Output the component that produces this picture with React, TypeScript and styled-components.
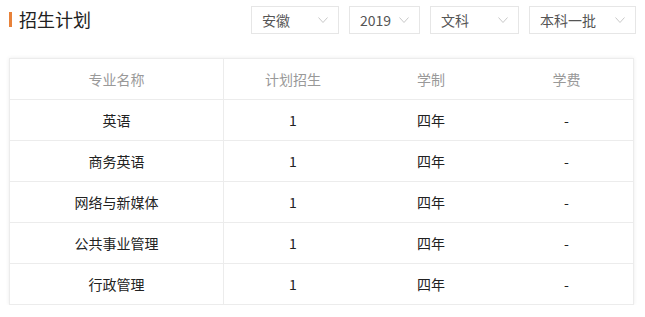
import styled, { createGlobalStyle } from "styled-components";

const GlobalStyle = createGlobalStyle`
  body {
    margin: 0;
    background: #fff;
    font-family: "Noto Sans CJK SC", "Noto Sans", sans-serif;
    color: #333;
  }
`;

const Wrapper = styled.div`
  padding: 6px 9px 0 9px;
  width: 645px;
  box-sizing: border-box;
`;

const Header = styled.div`
  display: flex;
  justify-content: space-between;
  align-items: center;
  height: 28px;
`;

const Title = styled.h2`
  margin: 0;
  display: flex;
  align-items: center;
  font-size: 18px;
  font-weight: 400;
  line-height: 24px;
  color: #222;
  margin-top: -2px;

  &::before {
    content: "";
    display: block;
    width: 3px;
    height: 15px;
    background: #e8823a;
    margin-right: 7px;
  }
`;

const Selects = styled.div`
  display: flex;
  gap: 10px;
`;

const Select = styled.div<{ $w: number }>`
  width: ${(p) => p.$w}px;
  height: 28px;
  box-sizing: border-box;
  border: 1px solid #e6e6e6;
  display: flex;
  align-items: center;
  justify-content: space-between;
  padding: 0 10px 0 10px;
  font-size: 14px;
  color: #555;
`;

const Chevron = () => (
  <svg width="10" height="6" viewBox="0 0 10 6">
    <path d="M0.5 0.5 L5 5.5 L9.5 0.5" fill="none" stroke="#c8c8c8" strokeWidth="1" />
  </svg>
);

const Table = styled.div`
  margin-top: 24px;
  width: 625px;
  border: 1px solid #ececec;
  box-shadow: 0 0 4px rgba(0, 0, 0, 0.08);
  box-sizing: border-box;
`;

const Row = styled.div`
  display: grid;
  grid-template-columns: 214px 138px 138px 1fr;
  height: 41px;
  border-top: 1px solid #ececec;
  box-sizing: border-box;

  &:first-child {
    border-top: none;
    height: 40px;
  }
`;

const Cell = styled.div<{ $head?: boolean }>`
  display: flex;
  align-items: center;
  justify-content: center;
  font-size: 14px;
  color: ${(p) => (p.$head ? "#999" : "#222")};

  &:first-child {
    border-right: 1px solid #ececec;
  }
`;

const selects = [
  { label: "安徽", w: 88 },
  { label: "2019", w: 71 },
  { label: "文科", w: 89 },
  { label: "本科一批", w: 107 },
];

const rows = [
  ["英语", "1", "四年", "-"],
  ["商务英语", "1", "四年", "-"],
  ["网络与新媒体", "1", "四年", "-"],
  ["公共事业管理", "1", "四年", "-"],
  ["行政管理", "1", "四年", "-"],
];

export default function App() {
  return (
    <Wrapper>
      <GlobalStyle />
      <Header>
        <Title>招生计划</Title>
        <Selects>
          {selects.map((s) => (
            <Select key={s.label} $w={s.w}>
              <span>{s.label}</span>
              <Chevron />
            </Select>
          ))}
        </Selects>
      </Header>
      <Table>
        <Row>
          {["专业名称", "计划招生", "学制", "学费"].map((h) => (
            <Cell key={h} $head>
              {h}
            </Cell>
          ))}
        </Row>
        {rows.map((r) => (
          <Row key={r[0]}>
            {r.map((c, i) => (
              <Cell key={i}>{c}</Cell>
            ))}
          </Row>
        ))}
      </Table>
    </Wrapper>
  );
}
